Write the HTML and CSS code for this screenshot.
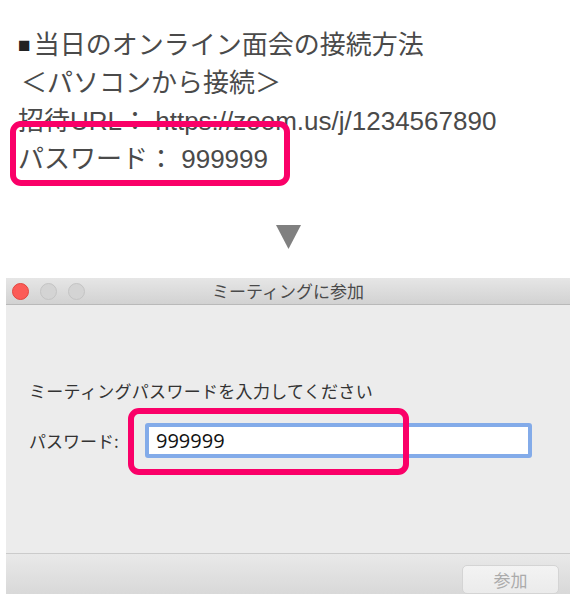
FILE: index.html
```html
<!DOCTYPE html>
<html lang="ja">
<head>
    <meta charset="UTF-8">
    <meta name="viewport" content="width=device-width, initial-scale=1.0">
    <title>オンライン面会の接続方法</title>
    <link rel="stylesheet" href="styles.css">
</head>
<body>
<div class="note">
    <p class="note__line"><span class="note__mark">■</span>当日のオンライン面会の接続方法</p>
    <p class="note__line note__line--indent">＜パソコンから接続＞</p>
    <p class="note__line">招待URL： https://zoom.us/j/1234567890</p>
    <p class="note__line">パスワード： 999999</p>
    <div class="highlight highlight--note"></div>
</div>

<div class="arrow">
    <svg width="25" height="24" viewBox="0 0 25 24">
        <polygon points="0,0 25,0 12.5,24" fill="#808080"/>
    </svg>
</div>

<div class="window">
    <div class="window__titlebar">
        <div class="window__lights">
            <span class="light light--close"></span>
            <span class="light"></span>
            <span class="light"></span>
        </div>
        <div class="window__title">ミーティングに参加</div>
        <div></div>
    </div>
    <div class="window__body">
        <p class="window__prompt">ミーティングパスワードを入力してください</p>
        <div class="field">
            <label class="field__label">パスワード:</label>
            <div class="field__input">999999</div>
        </div>
        <div class="highlight highlight--field"></div>
    </div>
    <div class="window__footer">
        <button type="button" class="window__button">参加</button>
    </div>
</div>
</body>
</html>
```

FILE: styles.css
```css
html, body {
    overflow: hidden;
}
body {
    margin: 0;
    background: #fff;
    font-family: "Liberation Sans", "Noto Sans CJK JP", sans-serif;
}
p { margin: 0; }

/* text block */
.note {
    position: relative;
    padding: 26px 0 0 18px;
    color: #4a4a4a;
    font-size: 26px;
}
.note__line {
    line-height: 38px;
    white-space: nowrap;
}
.note__line--indent {
    padding-left: 3px;
}
.note__mark {
    font-size: 21px;
    margin-right: 3px;
    vertical-align: 2px;
    color: #222;
}

/* pink markers */
.highlight {
    position: absolute;
    box-sizing: border-box;
    border: 6px solid #fa0068;
    border-radius: 11px;
}
.highlight--note {
    left: 10px;
    top: 121px;
    width: 280px;
    height: 65px;
}
.highlight--field {
    left: 122px;
    top: 103px;
    width: 281px;
    height: 67px;
}

.arrow {
    display: flex;
    justify-content: center;
    padding: 47px 0 29px;
    margin-left: 2px;
}
.arrow svg { display: block; }

/* mac window */
.window {
    margin: 0 4px 0 6px;
    font-family: "Noto Sans CJK JP", sans-serif;
}
.window__titlebar {
    display: grid;
    grid-template-columns: 1fr auto 1fr;
    align-items: center;
    height: 26px;
    background: linear-gradient(#e6e6e6, #d2d2d2);
    border-bottom: 1px solid #b9b9b9;
}
.window__lights {
    display: flex;
    gap: 11px;
    padding-left: 6px;
}
.light {
    box-sizing: border-box;
    width: 17px;
    height: 17px;
    border-radius: 50%;
    background: #d4d4d4;
    border: 1px solid #c4c4c4;
}
.light--close {
    background: #fc5b57;
    border-color: #e2463f;
}
.window__title {
    font-size: 17px;
    color: #4a4a4a;
    line-height: 26px;
}
.window__body {
    position: relative;
    height: 248px;
    box-sizing: border-box;
    padding: 76px 0 0 23px;
    background: #ececec;
    color: #333;
}
.window__prompt {
    font-size: 17px;
    line-height: 20px;
    letter-spacing: 0.3px;
}
.field {
    display: flex;
    align-items: center;
    margin-top: 22px;
}
.field__label {
    font-size: 17px;
    width: 116px;
}
.field__input {
    box-sizing: border-box;
    width: 387px;
    height: 35px;
    padding: 0 7px;
    background: #fff;
    border: 4px solid #83abe9;
    border-radius: 3px;
    font-family: "Open Sans", sans-serif;
    font-size: 20px;
    line-height: 27px;
    color: #111;
}
.window__footer {
    display: flex;
    justify-content: flex-end;
    padding: 11px 11px 1px 0;
    border-top: 1px solid #cbcbcb;
    background: linear-gradient(#e9e9e9, #d8d8d8);
}
.window__button {
    width: 97px;
    height: 29px;
    padding: 0;
    border: 1px solid #d4d4d4;
    border-radius: 5px;
    background: linear-gradient(#f3f3f3, #ebebeb);
    font-family: "Noto Sans CJK JP", sans-serif;
    font-size: 17px;
    color: #ababab;
}
```
